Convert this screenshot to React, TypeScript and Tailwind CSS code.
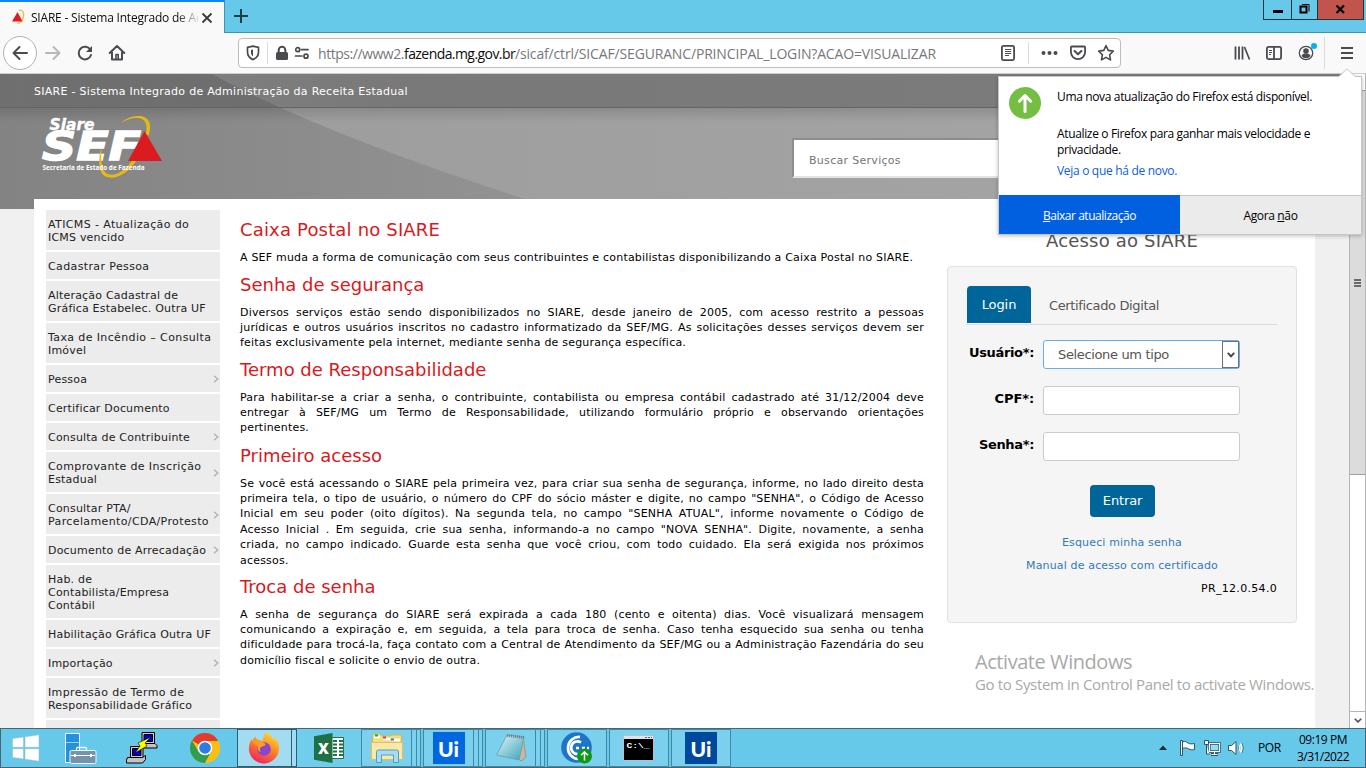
import type { ReactNode } from "react";

const menuItems: { lines: string[]; sub?: boolean; h: string; wide?: number }[] = [
  { lines: ["ATICMS - Atualização do", "ICMS vencido"], h: "h-10", wide: 0 },
  { lines: ["Cadastrar Pessoa"], h: "h-[27px]", wide: 0 },
  { lines: ["Alteração Cadastral de", "Gráfica Estabelec. Outra UF"], h: "h-10" },
  { lines: ["Taxa de Incêndio – Consulta", "Imóvel"], h: "h-10", wide: 0 },
  { lines: ["Pessoa"], sub: true, h: "h-[27px]" },
  { lines: ["Certificar Documento"], h: "h-[27px]" },
  { lines: ["Consulta de Contribuinte"], sub: true, h: "h-[27px]" },
  { lines: ["Comprovante de Inscrição", "Estadual"], sub: true, h: "h-10", wide: 0 },
  { lines: ["Consultar PTA/", "Parcelamento/CDA/Protesto"], sub: true, h: "h-10", wide: 1 },
  { lines: ["Documento de Arrecadação"], sub: true, h: "h-[27px]" },
  { lines: ["Hab. de", "Contabilista/Empresa", "Contábil"], h: "h-[53px]" },
  { lines: ["Habilitação Gráfica Outra UF"], h: "h-[27px]" },
  { lines: ["Importação"], sub: true, h: "h-[27px]" },
  { lines: ["Impressão de Termo de", "Responsabilidade Gráfico"], h: "h-10", wide: 0 },
  { lines: [], h: "h-10" },
];

const sections: { title: string; track: string; lines: string[]; gap: string }[] = [
  {
    title: "Caixa Postal no SIARE",
    track: "tracking-[0.17px]",
    gap: "mb-[8.2px]",
    lines: [
      "A SEF muda a forma de comunicação com seus contribuintes e contabilistas disponibilizando a Caixa Postal no SIARE.",
    ],
  },
  {
    title: "Senha de segurança",
    track: "tracking-normal",
    gap: "mb-[7.8px]",
    lines: [
      "Diversos serviços estão sendo disponibilizados no SIARE, desde janeiro de 2005, com acesso restrito a pessoas",
      "jurídicas e outros usuários inscritos no cadastro informatizado da SEF/MG. As solicitações desses serviços devem ser",
      "feitas exclusivamente pela internet, mediante senha de segurança específica.",
    ],
  },
  {
    title: "Termo de Responsabilidade",
    track: "tracking-normal",
    gap: "mb-[8.8px]",
    lines: [
      "Para habilitar-se a criar a senha, o contribuinte, contabilista ou empresa contábil cadastrado até 31/12/2004 deve",
      "entregar à SEF/MG um Termo de Responsabilidade, utilizando formulário próprio e observando orientações",
      "pertinentes.",
    ],
  },
  {
    title: "Primeiro acesso",
    track: "tracking-normal",
    gap: "mb-[7.6px]",
    lines: [
      "Se você está acessando o SIARE pela primeira vez, para criar sua senha de segurança, informe, no lado direito desta",
      "primeira tela, o tipo de usuário, o número do CPF do sócio máster e digite, no campo \"SENHA\", o Código de Acesso",
      "Inicial em seu poder (oito dígitos). Na segunda tela, no campo \"SENHA ATUAL\", informe novamente o Código de",
      "Acesso Inicial . Em seguida, crie sua senha, informando-a no campo \"NOVA SENHA\". Digite, novamente, a senha",
      "criada, no campo indicado. Guarde esta senha que você criou, com todo cuidado. Ela será exigida nos próximos",
      "acessos.",
    ],
  },
  {
    title: "Troca de senha",
    track: "tracking-normal",
    gap: "mb-[8px]",
    lines: [
      "A senha de segurança do SIARE será expirada a cada 180 (cento e oitenta) dias. Você visualizará mensagem",
      "comunicando a expiração e, em seguida, a tela para troca de senha. Caso tenha esquecido sua senha ou tenha",
      "dificuldade para trocá-la, faça contato com a Central de Atendimento da SEF/MG ou a Administração Fazendária do seu",
      "domicílio fiscal e solicite o envio de outra.",
    ],
  },
];

function TabStrip() {
  return (
    <div className="flex h-[33px] shrink-0 bg-[#66c9ea]">
      <div className="flex w-[225px] items-center border-t-2 border-r border-t-[#0a84ff] border-r-[#3d93b3] bg-[#f9f9fa] pl-2">
        <svg width="17" height="17" viewBox="0 0 17 17" className="mr-1 ml-0.5 shrink-0">
          <path d="M9 1.500C13 .5 14.500 4 13 9c-1 3-3 5-5.500 5.500" fill="none" stroke="#e8c24a" strokeWidth="1.500" />
          <path d="M7.500 3 12.500 12.500H2z" fill="#e01b22" />
        </svg>
        <div className="w-[167px] overflow-hidden text-xs tracking-[-0.21px] whitespace-nowrap text-[#0c0c0d] [mask-image:linear-gradient(to_right,black_145px,transparent_170px)]">
          SIARE - Sistema Integrado de Ad
        </div>
        <svg width="12" height="12" viewBox="0 0 12 12" className="ml-[3px] shrink-0" stroke="#3a3a3a" strokeWidth="1.800">
          <path d="M1.500 1.500 10.500 10.500M10.500 1.500 1.500 10.500" />
        </svg>
      </div>
      <div className="flex flex-1 items-start border-b border-[#3d93b3]">
        <svg width="16" height="16" viewBox="0 0 16 16" className="mt-2 ml-2" stroke="#1b3c48" strokeWidth="2">
          <path d="M8 1v14M1 8h14" />
        </svg>
        <div className="mr-[2px] ml-auto flex h-5 border border-t-0 border-[#23343c]">
          <div className="flex w-[27px] justify-center">
            <div className="mt-[10px] h-[3px] w-[10px] bg-black" />
          </div>
          <div className="w-[26px] border-l border-[#23343c]">
            <svg width="25" height="19" viewBox="0 0 25 19" fill="none" stroke="#000">
              <path d="M8.500 6.500h6v6h-6z" strokeWidth="2" />
              <path d="M10 4.500h7v7" />
            </svg>
          </div>
          <div className="w-[46px] border-l border-[#23343c] bg-[#c1554d]">
            <svg width="45" height="19" viewBox="0 0 45 19" stroke="#000" strokeWidth="2.200">
              <path d="M18.500 5.500 26 13M26 5.500 18.500 13" />
            </svg>
          </div>
        </div>
      </div>
    </div>
  );
}

function NavBar() {
  return (
    <div className="flex h-[41px] shrink-0 items-center border-b border-[#cfcfcf] bg-[#f9f9fa] text-[#4a4a4f]">
      <div className="ml-[3px] flex size-[34px] items-center justify-center rounded-full border border-[#b1b1b3] bg-white">
        <svg width="18" height="18" viewBox="0 0 18 18" fill="none" stroke="currentColor" strokeWidth="2" strokeLinecap="round" strokeLinejoin="round">
          <path d="M16 9H2.500M8.500 3l-6 6 6 6" />
        </svg>
      </div>
      <svg width="18" height="18" viewBox="0 0 18 18" className="ml-[7px]" fill="none" stroke="#b8b8ba" strokeWidth="2" strokeLinecap="round" strokeLinejoin="round">
        <path d="M2 9h13.500M9.500 3l6 6-6 6" />
      </svg>
      <svg width="18" height="18" viewBox="0 0 18 18" className="ml-[14px]" fill="none" stroke="currentColor" strokeWidth="2">
        <path d="M14.500 6A6.300 6.300 0 1 0 15 11" strokeLinecap="round" />
        <path d="M16 2v6h-6z" fill="currentColor" stroke="none" />
      </svg>
      <svg width="18" height="18" viewBox="0 0 18 18" className="ml-[14px]" fill="none" stroke="currentColor" strokeWidth="2" strokeLinejoin="round" strokeLinecap="round">
        <path d="M1.700 9 9 2l7.300 7M4 8.500V15.500h10V8.500" />
        <path d="M8 15v-4.500h2.200V15" strokeWidth="1.600" />
      </svg>
      <div className="ml-[112px] flex h-[30px] w-[883px] items-center rounded-sm border border-[#bdbdbf] bg-white">
        <svg width="14" height="16" viewBox="0 0 14 16" className="ml-[7px]" fill="none" stroke="currentColor">
          <path d="M7 1.200 12.500 2.300V7c0 3.500-2.500 6.300-5.500 7.600C4 13.300 1.500 10.500 1.500 7V2.300z" strokeWidth="1.700" strokeLinejoin="round" />
          <path d="M7 4.500 5 5v2.500c0 1.600.8 3 2 4z" fill="currentColor" stroke="none" />
        </svg>
        <div className="ml-[7px] h-[22px] w-px bg-[#dcdcde]" />
        <svg width="14" height="16" viewBox="0 0 14 16" className="ml-[7px]" fill="none">
          <rect x="1" y="7" width="12" height="8" rx="1.500" fill="currentColor" />
          <path d="M3.700 8V5a3.300 3.300 0 0 1 6.600 0v3" stroke="currentColor" strokeWidth="2" />
        </svg>
        <svg width="16" height="14" viewBox="0 0 16 14" className="ml-[5px]" fill="none" stroke="currentColor" strokeWidth="1.700">
          <circle cx="3.700" cy="3.700" r="2" />
          <path d="M7.500 3.700H14M1.500 10H8" strokeLinecap="round" />
          <circle cx="12" cy="10.200" r="2" />
        </svg>
        <div className="mt-[2px] ml-[8px] flex text-sm leading-5 whitespace-nowrap text-[#77777c]">
          <span className="w-[86px] tracking-[-0.46px]">https://www2.</span>
          <span className="w-[111px] tracking-[-0.57px] text-[#0c0c0d]">fazenda.mg.gov.br</span>
          <span className="tracking-[-0.16px]">/sicaf/ctrl/SICAF/SEGURANC/PRINCIPAL_LOGIN?ACAO=VISUALIZAR</span>
        </div>
        <svg width="16" height="16" viewBox="0 0 16 16" className="mr-[12px] ml-auto shrink-0" fill="none" stroke="currentColor">
          <rect x="1.900" y=".9" width="12.200" height="14.200" rx="1.500" strokeWidth="1.800" />
          <path d="M5 4.500h6.200M5 6.500h6.200M5 8.500h6.200M5 10.500h4" strokeWidth="1" />
        </svg>
        <div className="h-[22px] w-px bg-[#dcdcde]" />
        <svg width="18" height="6" viewBox="0 0 18 6" className="ml-[11px] shrink-0" fill="currentColor">
          <circle cx="3.500" cy="3" r="2" />
          <circle cx="9.500" cy="3" r="2" />
          <circle cx="15.500" cy="3" r="2" />
        </svg>
        <svg width="18" height="16" viewBox="0 0 18 16" className="ml-[11px] shrink-0" fill="none" stroke="currentColor" strokeWidth="1.800" strokeLinejoin="round" strokeLinecap="round">
          <path d="M2.900 1.500h12.200c.6 0 1 .4 1 1V7a7.100 7.100 0 0 1-14.200 0V2.500c0-.6.400-1 1-1z" />
          <path d="M5.600 6 9 9.200 12.400 6" strokeWidth="2" />
        </svg>
        <svg width="18" height="18" viewBox="0 0 18 18" className="mr-[5px] ml-[10px] shrink-0" fill="none" stroke="currentColor" strokeWidth="1.600" strokeLinejoin="round">
          <path d="m9 1.700 2.200 4.700 5.100.7-3.700 3.600.9 5.200L9 13.400l-4.500 2.500.9-5.200L1.700 7.100l5.100-.7z" />
        </svg>
      </div>
      <svg width="18" height="16" viewBox="0 0 18 16" className="ml-[112px]" stroke="currentColor" strokeWidth="2">
        <path d="M2.500 1.500v13M6 1.500v13M9.500 1.500v13" strokeWidth="1.800" />
        <path d="m11.500 2 5 12.500" strokeWidth="1.700" />
      </svg>
      <svg width="18" height="16" viewBox="0 0 18 16" className="ml-[14px]" fill="none" stroke="currentColor">
        <rect x="1.900" y="1.900" width="14.200" height="12.200" rx="1.800" strokeWidth="1.800" />
        <path d="M9 2v12" strokeWidth="1.800" />
        <path d="M4 5.500h3M4 7.500h3M4 9.500h2" />
      </svg>
      <svg width="20" height="22" viewBox="0 0 20 22" className="ml-[14px]" fill="none">
        <circle cx="9" cy="11" r="6.700" stroke="currentColor" strokeWidth="1.300" />
        <circle cx="9" cy="9" r="2.800" fill="currentColor" />
        <path d="M4.500 14c.5-1.800 2.500-2.400 4.500-2.400s4 .6 4.500 2.400A5.600 5.600 0 0 1 9 16.200 5.600 5.600 0 0 1 4.500 14z" fill="currentColor" />
        <circle cx="17" cy="4" r="3" fill="#00b3f4" />
      </svg>
      <div className="ml-[7px] h-[32px] w-px bg-[#dcdcde]" />
      <svg width="14" height="14" viewBox="0 0 14 14" className="ml-[15px]" stroke="currentColor" strokeWidth="2">
        <path d="M1 2h12M1 7h12M1 12h12" />
      </svg>
    </div>
  );
}

function Logo() {
  return (
    <svg width="124" height="66" viewBox="0 0 124 66" className="mt-[7px] ml-[41px] block">
      <path d="M80 8C86 2 97-1 104 2.500c6 3 6 12 3.500 18l-3-1C106.500 13 106 6.500 101 4 95 1.500 86 4 80 8z" fill="#e6b913" />
      <g fontFamily="DejaVu Sans" fontStyle="oblique" fontWeight="700" fill="#fff" stroke="#fff">
        <text x="8.500" y="14.500" fontSize="16" strokeWidth=".4" textLength="45" lengthAdjust="spacingAndGlyphs">
          Siare
        </text>
        <text x="1" y="45" fontSize="38.500" strokeWidth="1.400" textLength="99" lengthAdjust="spacingAndGlyphs">
          SEF
        </text>
      </g>
      <path d="M59.500 35c-2 10-2 22 4 26 9 5 23-1.500 32-15.500h-4.500C84 56.500 73 62.500 65.500 58.500c-4.500-3-6-13-5-23.500z" fill="#e6b913" />
      <path d="M103.500 16 121 46H87z" fill="#dc1b20" />
      <text x="1.500" y="54.500" fontSize="6.200" fontFamily="Open Sans" fontWeight="700" fill="#fff" textLength="102" lengthAdjust="spacingAndGlyphs">
        Secretaria de Estado de Fazenda
      </text>
    </svg>
  );
}

function Banner() {
  return (
    <div className="relative h-[135px] bg-gradient-to-r from-[#838383] via-[#979797] via-50% to-[#a8a8a8]">
      <svg width="1349" height="135" viewBox="0 0 1349 135" className="absolute inset-0">
        <defs>
          <linearGradient id="swoosh" x1="0" y1="0" x2="1" y2="0">
            <stop offset="0" stopColor="#9d9d9d" />
            <stop offset="1" stopColor="#a6a6a6" />
          </linearGradient>
          <linearGradient id="shade" x1="0" y1="0" x2="0" y2="1">
            <stop offset="0" stopColor="#000" stopOpacity=".13" />
            <stop offset="1" stopColor="#000" stopOpacity="0" />
          </linearGradient>
        </defs>
        <path d="M212 0Q320 59 528 126L1349 126V0z" fill="url(#swoosh)" />
        <path d="M965 135Q1000 121 1060 113V135z" fill="#969696" />
        <rect y="34" width="1349" height="14" fill="url(#shade)" />
      </svg>
      <div className="relative flex h-[34px] items-center border-b border-[#646464] bg-gradient-to-r from-black/15 via-black/24 via-30% to-black/25 pt-[3px] pl-[34px] text-[11px] tracking-[0.28px] text-white">
        SIARE - Sistema Integrado de Administração da Receita Estadual
      </div>
      <div className="relative flex">
        <Logo />
        <div className="mt-[30px] ml-[627px] flex h-[40px] w-[480px] items-center border-2 border-t-[#8d8d8d] border-r-[#e3e3e3] border-b-[#e3e3e3] border-l-[#8d8d8d] bg-white pt-[6px] pl-[15px] text-[11px] tracking-[0.3px] text-[#757575]">
          Buscar Serviços
        </div>
      </div>
    </div>
  );
}

function Sidebar() {
  return (
    <nav className="mt-[11px] ml-3 flex w-[174px] shrink-0 flex-col gap-[2px] text-[11px] leading-[13px] text-[#222]">
      {menuItems.map((m, i) => (
        <div key={i} className={`flex shrink-0 items-center justify-between bg-[#ececec] pr-px pl-[2px] whitespace-nowrap ${m.h}`}>
          <div className="pt-[2px]">
            {m.lines.map((l, j) => (
              <div key={l} className={m.wide === j ? "tracking-[0.38px]" : "tracking-[0.2px]"}>{l}</div>
            ))}
          </div>
          {m.sub && (
            <svg width="6" height="8" viewBox="0 0 6 8" fill="none" stroke="#b0b0b0" strokeWidth="1.300" className="mt-px">
              <path d="m1 .7 3.800 3.300L1 7.300" />
            </svg>
          )}
        </div>
      ))}
    </nav>
  );
}

function Articles() {
  return (
    <main className="mt-[20px] ml-5 w-[684px] shrink-0 text-black">
      {sections.map((s) => (
        <section key={s.title}>
          <h2 className={`h-[22px] text-[18px] leading-[22px] text-[#d81920] ${s.track}`}>{s.title}</h2>
          <div className={`mt-[9px] text-[11px] leading-[15.4px] ${s.gap}`}>
            {s.lines.map((l, i) => (
              <div
                key={l}
                className={
                  i < s.lines.length - 1
                    ? "text-justify tracking-[0.18px] whitespace-nowrap [text-align-last:justify]"
                    : "tracking-[0.2px] whitespace-nowrap"
                }
              >
                {l}
              </div>
            ))}
          </div>
        </section>
      ))}
    </main>
  );
}

function Field({ label, track, children }: { label: string; track: string; children: ReactNode }) {
  return (
    <div className="mb-[17px] flex h-[29px]">
      <div className={`mr-[9px] w-[67px] pt-[3px] text-right text-[13px] leading-[19px] font-bold whitespace-nowrap text-black ${track}`}>{label}</div>
      {children}
    </div>
  );
}

function LoginBox() {
  return (
    <aside className="ml-[23px] w-[350px] shrink-0">
      <h2 className="mt-[30px] text-center text-[18px] leading-[24px] tracking-[0.19px] text-[#555]">Acesso ao SIARE</h2>
      <div className="mt-[13px] h-[357px] rounded-[4px] border border-[#e1e1e1] bg-[#f5f5f5] px-[19px] pt-[19px]">
        <div className="flex h-[39px] border-b border-[#dcdcdc]">
          <div className="h-[37px] w-16 rounded-t-[4px] bg-[#006699] text-center text-[13px] leading-[37px] tracking-[-0.1px] text-white">Login</div>
          <div className="pl-[18px] text-[13px] leading-[39px] tracking-[-0.36px] text-[#555]">Certificado Digital</div>
        </div>
        <div className="pt-[15px]">
          <Field label="Usuário*:" track="tracking-[-0.34px]">
            <div className="flex w-[197px] items-center justify-between rounded-[3px] border border-[#66afe9] bg-white pl-[14px] text-[13px] tracking-[-0.35px] text-[#555]">
              Selecione um tipo
              <div className="flex h-[27px] w-[17px] items-center justify-center border border-[#707070]">
                <svg width="8" height="6" viewBox="0 0 8 6" fill="none" stroke="#444" strokeWidth="1.900">
                  <path d="M.8.8 4 4.300 7.200.8" />
                </svg>
              </div>
            </div>
          </Field>
          <Field label="CPF*:" track="tracking-[-0.1px]">
            <div className="w-[197px] rounded-[3px] border border-[#ccc] bg-white" />
          </Field>
          <Field label="Senha*:" track="tracking-[-0.34px]">
            <div className="w-[197px] rounded-[3px] border border-[#ccc] bg-white" />
          </Field>
        </div>
        <div className="mt-[24px] ml-[123px] h-8 w-[65px] rounded-[4px] bg-[#006699] text-center text-[13px] leading-[31px] tracking-[-0.15px] text-white">Entrar</div>
        <div className="mt-[14px] text-center text-[11px] leading-[23px] tracking-[0.15px] text-[#337ab7]">
          <div>Esqueci minha senha</div>
          <div>Manual de acesso com certificado</div>
        </div>
        <div className="text-right text-[11px] leading-[23px] tracking-[0.31px] text-black">PR_12.0.54.0</div>
      </div>
      <div className="mt-[27px] ml-[28px] font-['Open_Sans',sans-serif] whitespace-nowrap text-[#a9a9a9]">
        <div className="text-[20px] leading-6 tracking-[-0.44px]">Activate Windows</div>
        <div className="text-[15px] leading-[20px] tracking-[-0.34px]">Go to System in Control Panel to activate Windows.</div>
      </div>
    </aside>
  );
}

function Scrollbar() {
  return (
    <div className="flex w-[17px] shrink-0 flex-col border-x border-[#b5b5b5] bg-white">
      <div className="h-4 shrink-0" />
      <div className="flex h-[385px] shrink-0 flex-col items-center justify-center gap-px border-y border-[#a0a0a0] bg-[#dcdcdc]">
        <div className="h-[2px] w-[7px] bg-[#6a6a6a]" />
        <div className="h-[2px] w-[7px] bg-[#6a6a6a]" />
        <div className="h-[2px] w-[7px] bg-[#6a6a6a]" />
      </div>
      <div className="mt-auto flex h-[17px] items-center justify-center border-t border-[#b5b5b5]">
        <svg width="8" height="5" viewBox="0 0 8 5" fill="none" stroke="#505050" strokeWidth="1.600">
          <path d="m.7.700 3.300 3.200L7.300.7" />
        </svg>
      </div>
    </div>
  );
}

function UpdatePopup() {
  return (
    <div className="absolute top-[76px] left-[998px] w-[364px] border border-[#c6c6c6] bg-white text-xs leading-4 text-black shadow-[0_1px_4px_rgba(0,0,0,0.25)]">
      <svg width="18" height="10" viewBox="0 0 18 10" className="absolute -top-[9px] left-[339px]">
        <path d="M0 9.500 9 .8l9 8.700z" fill="#fff" />
        <path d="M0 9.200 9 .8l9 8.400" fill="none" stroke="#c6c6c6" />
      </svg>
      <div className="flex h-[118px] pt-[10px] pl-[10px]">
        <svg width="32" height="32" viewBox="0 0 32 32" className="mr-4 shrink-0">
          <circle cx="16" cy="16" r="16" fill="#74be43" />
          <path d="M16 24.500V9M10.300 14.200 16 8.500l5.700 5.700" fill="none" stroke="#fff" strokeWidth="3" strokeLinecap="round" strokeLinejoin="round" />
        </svg>
        <div className="whitespace-nowrap">
          <div className="mt-[2px] tracking-[-0.35px]">Uma nova atualização do Firefox está disponível.</div>
          <div className="mt-[21px] tracking-[-0.35px]">
            Atualize o Firefox para ganhar mais velocidade e
            <br />
            privacidade.
          </div>
          <div className="mt-[5px] tracking-[-0.31px] text-[#0a60df]">Veja o que há de novo.</div>
        </div>
      </div>
      <div className="flex h-[39px] text-center leading-[41px]">
        <div className="w-[181px] bg-[#0060e0] tracking-[-0.46px] text-white">
          <u>B</u>aixar atualização
        </div>
        <div className="flex-1 border-t border-[#c6c6c6] bg-[#ebebeb] leading-[39px] tracking-[-0.36px]">
          Agora <u>n</u>ão
        </div>
      </div>
    </div>
  );
}

function UiTile({ dark }: { dark?: boolean }) {
  return (
    <div className={`flex size-8 items-center justify-center font-['Lato',sans-serif] text-[21px] leading-none font-black text-white ${dark ? "bg-[#00489d]" : "bg-[#0067df]"}`}>
      Ui
    </div>
  );
}

function TaskButton({ w, stack = 0, active, children }: { w: string; stack?: number; active?: boolean; children: ReactNode }) {
  const edge = active ? "border-[#23607a] bg-[#a3dcf1]" : "border-[#3c8aa8] bg-[#7bd0ee]";
  return (
    <div className={`flex h-full ${w}`}>
      <div className={`flex flex-1 items-center justify-center border ${edge}`}>{children}</div>
      {stack > 0 && <div className={`w-[5px] border border-l-0 ${edge}`} />}
      {stack > 1 && <div className={`w-1 border border-l-0 ${edge}`} />}
    </div>
  );
}

function Taskbar() {
  return (
    <div className="flex h-10 shrink-0 items-stretch border border-[#4b646e] bg-[#66c9ea] font-['Open_Sans',sans-serif]">
      <svg width="30" height="28" viewBox="0 0 30 28" className="mt-[5px] ml-[10px] shrink-0">
        <path d="M1.500 4.600 12.500 3v10.300h-11zM14 2.800 28 .8v12.500H14zM1.500 14.700h11V25l-11-1.600zM14 14.700h14v12.500l-14-2z" fill="#fff" stroke="#8fb9c9" strokeWidth=".5" />
      </svg>
      <svg width="34" height="34" viewBox="0 0 34 34" className="mt-[2px] ml-[22px] shrink-0">
        <path d="M2.500 2.500h14v29h-14z" fill="#2590de" stroke="#e9f6fb" />
        <path d="M3 11.500h13" stroke="#9ed4f2" />
        <path d="M13.500 20v-2.500q0-1 1-1h8q1 0 1 1V20" fill="none" stroke="#eef7fb" strokeWidth="1.300" />
        <rect x="7" y="19.500" width="26" height="13" rx="1.500" fill="#7593a9" stroke="#eef7fb" />
        <path d="M8 24.500h24" stroke="#fff" />
        <path d="M12 23v3M28 23v3" stroke="#fff" strokeWidth="2" />
      </svg>
      <svg width="34" height="34" viewBox="0 0 34 34" className="mt-[2px] ml-[28px] shrink-0">
        <g stroke="#000">
          <path d="M17 1.500h12.500v11H17z" fill="#d4d0c8" />
          <path d="M19 3.500h8.500v7H19z" fill="#0000d8" />
          <path d="m15 12.500h15l2 2v2.500H15z" fill="#c3c3c3" />
          <path d="M5.500 15.500H18v11H5.500z" fill="#d4d0c8" />
          <path d="M7.500 17.500H16v7H7.500z" fill="#0000d8" />
          <path d="M2.500 26.500h15l3-2v4l-3 3.500H1.500v-3z" fill="#c3c3c3" />
          <path d="m26 6-13 6 2 3-5 7 12-7-2-3z" fill="#ffff00" strokeWidth=".6" />
        </g>
      </svg>
      <svg width="30" height="30" viewBox="-15 -15 30 30" className="mt-1 ml-[31px] shrink-0">
        <circle r="15" fill="#fbbf12" />
        <path d="M0 0-13-7.500A15 15 0 0 1 13-7.500z" fill="#e33b2e" />
        <path d="M-13-7.500A15 15 0 0 0 0 15L6.500 3.500-6.500 3.500z" fill="#2f9e4f" />
        <path d="M0-7h13.300L13-7.500A15 15 0 0 1 0 15L6.500 3.500z" fill="#fbbf12" />
        <circle r="7.300" fill="#fff" />
        <circle r="5.800" fill="#2c7be5" />
      </svg>
      <div className="ml-[17px] flex">
        <TaskButton w="w-[60px]" stack={1} active>
          <svg width="32" height="32" viewBox="0 0 32 32" className="-ml-px">
            <defs>
              <linearGradient id="ffx" x1=".8" y1="0" x2=".3" y2="1">
                <stop offset="0" stopColor="#ffe23c" />
                <stop offset=".45" stopColor="#ff8a22" />
                <stop offset="1" stopColor="#ee2260" />
              </linearGradient>
            </defs>
            <path d="M19 0c4 3 5.500 5 6.500 8 1-1 1-2 1-3 4 4 5 9 4.300 13.500C29.500 26 23.500 31.500 16 31.500S2 26 1 18.500C.5 13.500 2 9.500 4 7c0 1 .3 2 1 2.500C5 7.500 6 5.500 7.500 4.500c0 2 1.500 3.500 4 3.500L15 9c0-4 1-7 4-9z" fill="url(#ffx)" />
            <circle cx="16" cy="17" r="6.800" fill="#8a45c9" />
            <path d="M4.500 10c3-2.500 8-1.500 10.500.5 2 .5 3 1.500 2 3l-4 1.500c-1.500 1.500-1.500 3.500 0 5-3-.5-4-3.500-3-6-2-.5-4-2-5.500-4z" fill="#ff9c25" />
          </svg>
        </TaskButton>
        <div className="flex h-full w-16 items-center justify-center bg-[#70cdec]">
          <svg width="31" height="30" viewBox="0 0 31 30">
            <path d="M17 4.500h12.500v21H17z" fill="#fff" stroke="#217346" />
            <path d="M19 8h4M25 8h4M19 11.500h4M25 11.500h4M19 15h4M25 15h4M19 18.500h4M25 18.500h4M19 22h4M25 22h4" stroke="#217346" strokeWidth="2" />
            <path d="M0 3.200 18.500 0v30L0 26.800z" fill="#1f7044" />
            <text x="4" y="20.500" fontSize="15" fontFamily="Open Sans" fontWeight="800" fill="#fff">X</text>
          </svg>
        </div>
        <TaskButton w="w-[60px]" stack={2}>
          <svg width="34" height="32" viewBox="0 0 34 32">
            <path d="M2.500 4q0-2 2-2h5q2 0 2 2h9V3h11v22H2.500z" fill="#f5dc85" stroke="#d9b650" />
            <path d="M4 5h6M13 7h7M22 8h8" stroke="#fff" strokeWidth="2.500" />
            <path d="M5 3.500h3" stroke="#16b127" strokeWidth="2" />
            <path d="M13 5.500h3" stroke="#d73c2a" strokeWidth="2" />
            <path d="M21 7.500h3" stroke="#2b86e8" strokeWidth="2" />
            <path d="M1.500 10.500h31v17h-31z" fill="#fae9a6" stroke="#dfbf62" />
            <path d="M6.500 30.500V20q0-2 2-2h18q2 0 2 2v10.500h-5V23H11.500v7.500z" fill="#a8dcf3" stroke="#4d9ec7" />
          </svg>
        </TaskButton>
        <TaskButton w="w-[60px] ml-[2px]" stack={2}>
          <UiTile />
        </TaskButton>
        <TaskButton w="w-[60px] ml-[2px]" stack={2}>
          <svg width="32" height="32" viewBox="0 0 32 32">
            <defs>
              <linearGradient id="pad" x1="0" y1="0" x2="1" y2="1">
                <stop offset="0" stopColor="#e3f6f8" />
                <stop offset="1" stopColor="#3aa3bd" />
              </linearGradient>
            </defs>
            <path d="m28 5 3 20-5 4-5-4z" fill="#c7b79d" stroke="#8e8778" strokeWidth=".7" />
            <path d="M12 3 29 5 24 28 1.500 23z" fill="url(#pad)" stroke="#6b9da9" strokeWidth=".8" />
            <path d="M12 3.500 29 5.500" stroke="#757b7d" strokeWidth="3" strokeDasharray="1 1" />
          </svg>
        </TaskButton>
        <TaskButton w="w-[60px] ml-[2px]">
          <svg width="32" height="32" viewBox="0 0 32 32">
            <circle cx="15.500" cy="15.500" r="15.300" fill="#1e75c8" />
            <g fill="none" stroke="#fff" strokeWidth="2.700">
              <path d="M19 5A11 11 0 1 0 17 27" />
              <path d="M20 10.500a6.300 6.300 0 1 0-3 11.500" />
            </g>
            <path d="M15 16h3M21 16h3M26 16h2" stroke="#fff" strokeWidth="2.500" />
            <circle cx="23.500" cy="24" r="7.500" fill="#0f9916" />
            <path d="M23.500 28.500v-8.500M20 23.300l3.500-3.500 3.500 3.500" fill="none" stroke="#fff" strokeWidth="1.500" />
          </svg>
        </TaskButton>
        <TaskButton w="w-[60px] ml-[2px]">
          <svg width="31" height="26" viewBox="0 0 31 26" className="mr-px">
            <path d="M.5.500h30v25H.5z" fill="#000" stroke="#b9bfc2" />
            <path d="M1 1h29v3H1z" fill="#dfe3e5" />
            <path d="M22 2.500h7" stroke="#606870" strokeDasharray="2 1" />
            <text x="3.500" y="12.500" fontSize="8" fontFamily="Liberation Mono" fontWeight="700" fill="#fff" textLength="23" lengthAdjust="spacingAndGlyphs">{"C:\\_"}</text>
          </svg>
        </TaskButton>
        <TaskButton w="w-[60px] ml-[2px]">
          <UiTile dark />
        </TaskButton>
      </div>
      <div className="mr-[16px] ml-auto flex items-center text-xs text-black">
        <svg width="8" height="5" viewBox="0 0 8 5" className="-mt-px">
          <path d="M0 5 4 .5 8 5z" fill="#1d2b31" />
        </svg>
        <svg width="18" height="18" viewBox="0 0 18 18" className="ml-[12px]" fill="#f3fafc" stroke="#31525f">
          <path d="M1.500 1.500h2v15h-2z" />
          <path d="M3.500 3c3-1.500 4 0 5.500 1s4 1 6.500.5v6c-2.500.8-4 .3-6-.7s-3.500-1.300-6-.3z" />
        </svg>
        <svg width="18" height="18" viewBox="0 0 18 18" className="ml-[6px]" fill="none" stroke="#31525f">
          <path d="M6.500 4.500h10v8h-10z" fill="#9cdcf2" stroke="#31525f" strokeWidth="2.600" />
          <path d="M6.500 4.500h10v8h-10z" stroke="#f6fcfe" strokeWidth="1.200" />
          <path d="M8 15.500h7" stroke="#31525f" strokeWidth="3" />
          <path d="M8.500 15.500h6M11.500 12.500v3" stroke="#f6fcfe" />
          <path d="M1.500 1.500h4v4h-4zM3.500 6v9h3" fill="#f6fcfe" />
        </svg>
        <svg width="18" height="16" viewBox="0 0 18 16" className="ml-[6px]" fill="none" stroke="#31525f">
          <path d="M1.500 5.500h3l4.500-4v13l-4.500-4h-3z" fill="#f6fcfe" />
          <path d="M11.500 5.500q1.500 2.500 0 5M13.500 3.500q2.500 4.500 0 9" stroke="#f6fcfe" strokeWidth="2" />
          <path d="M11 5.500q1.500 2.500 0 5M15 3q2.700 5 0 10" strokeWidth=".7" />
        </svg>
        <div className="ml-[13px] tracking-[-0.32px]">POR</div>
        <div className="ml-[16px] text-center leading-[17px]">
          <div className="tracking-[-0.46px]">09:19 PM</div>
          <div className="tracking-[-0.53px]">3/31/2022</div>
        </div>
      </div>
    </div>
  );
}

export default function App() {
  return (
    <div className="relative flex h-[768px] w-[1366px] flex-col overflow-hidden bg-white font-['Open_Sans',sans-serif]">
      <TabStrip />
      <NavBar />
      <div className="flex h-[654px] shrink-0 overflow-hidden">
        <div className="flex-1 overflow-hidden bg-[#f0f0f0] font-['DejaVu_Sans',sans-serif]">
          <Banner />
          <div className="relative -mt-[10px] ml-[34px] flex h-[540px] w-[1281px] bg-white">
            <Sidebar />
            <Articles />
            <LoginBox />
          </div>
        </div>
        <Scrollbar />
      </div>
      <Taskbar />
      <UpdatePopup />
    </div>
  );
}
